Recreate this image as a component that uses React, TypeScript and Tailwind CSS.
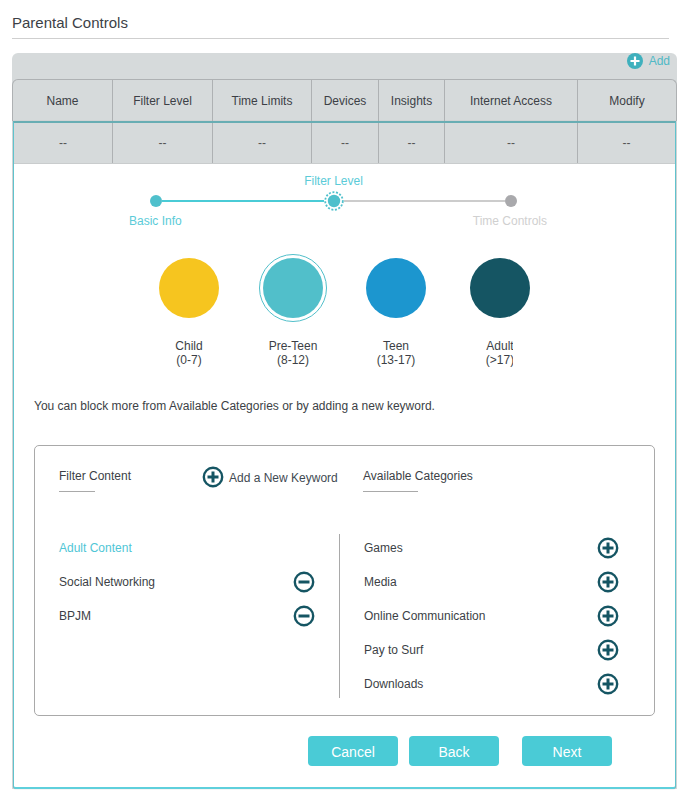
const columns = [
  { name: "Name", width: "w-[99px]", cell: "w-[98px]" },
  { name: "Filter Level", width: "w-[100px]", cell: "w-[100px]" },
  { name: "Time Limits", width: "w-[99px]", cell: "w-[99px]" },
  { name: "Devices", width: "w-[67px]", cell: "w-[67px]" },
  { name: "Insights", width: "w-[66px]", cell: "w-[66px]" },
  { name: "Internet Access", width: "w-[133px]", cell: "w-[133px]" },
  { name: "Modify", width: "w-[99px]", cell: "w-[98px]" },
];

const levels = [
  { name: "Child", age: "(0-7)", color: "bg-[#f6c51f]", slot: "w-[104px]" },
  { name: "Pre-Teen", age: "(8-12)", color: "bg-[#51bfca]", slot: "w-[103px]", selected: true },
  { name: "Teen", age: "(13-17)", color: "bg-[#1c96cf]", slot: "w-[104px]" },
  { name: "Adult", age: "(>17)", color: "bg-[#155563]", slot: "w-[60px]", clip: true },
];

const filtered = ["Adult Content", "Social Networking", "BPJM"];
const available = ["Games", "Media", "Online Communication", "Pay to Surf", "Downloads"];

function RoundIcon({ plus = false }: { plus?: boolean }) {
  return (
    <svg width="22" height="22" viewBox="0 0 22 22" className="shrink-0">
      <circle cx="11" cy="11" r="9.2" fill="none" stroke="#155563" strokeWidth="2.4" />
      <path d="M5.5 11h11" stroke="#155563" strokeWidth="3" />
      {plus && <path d="M11 5.5v11" stroke="#155563" strokeWidth="3" />}
    </svg>
  );
}

function Row({ label, active, icon }: { label: string; active?: boolean; icon?: "plus" | "minus" }) {
  return (
    <div className="flex h-[34px] items-center justify-between">
      <span className={active ? "text-[#4fc6d6]" : ""}>{label}</span>
      {icon && <RoundIcon plus={icon === "plus"} />}
    </div>
  );
}

export default function App() {
  return (
    <div className="h-[797px] w-[681px] overflow-hidden bg-white px-3 font-['Liberation_Sans',Arial,sans-serif] text-xs text-[#3c3f46]">
      <div className="flex h-[39px] items-start border-b border-[#cfcfcf] pt-[14px] text-[15px] leading-[18px]">
        Parental Controls
      </div>

      <div className="mt-[14px] w-[665px] rounded-t-md bg-[#d6dadb]">
        <div className="flex h-[26px] items-start justify-end gap-[6px] pr-[7px] text-[#4fb9c6]">
          <svg width="16" height="16" viewBox="0 0 16 16">
            <circle cx="8" cy="8" r="8" fill="#3fb0bd" />
            <path d="M8 3.5v9M3.5 8h9" stroke="#fff" strokeWidth="2.2" />
          </svg>
          <span className="leading-[17px]">Add</span>
        </div>

        <div className="flex h-[42px] rounded-t-md border-x border-t border-[#aeb1b3]">
          {columns.map((c, i) => (
            <div
              key={c.name}
              className={`flex items-center justify-center ${c.width} ${i > 0 ? "border-l border-[#aeb1b3]" : ""}`}
            >
              {c.name}
            </div>
          ))}
        </div>

        <div className="ml-px w-[663px] rounded-b-[3px] border-x border-t-2 border-b-2 border-x-[#5fc3cd] border-t-[#68adb3] border-b-[#5fd0dc] bg-white shadow-[0_0_1px_#999]">
          <div className="flex h-[41px] border-b border-[#c9cccd] bg-[#d6dadb] text-[#555]">
            {columns.map((c, i) => (
              <div
                key={c.name}
                className={`flex items-center justify-center ${c.cell} ${i > 0 ? "border-l border-[#aeb1b3]" : ""}`}
              >
                --
              </div>
            ))}
          </div>

          <div className="px-5">
            <div className="ml-[60px] w-[460px] pt-[10px]">
              <div className="pl-[19px] text-center leading-[14px] text-[#5bcbd8]">Filter Level</div>
              <div className="ml-[56px] mt-[3px] flex h-5 items-center">
                <span className="h-3 w-3 shrink-0 rounded-full bg-[#4fc0cc]" />
                <span className="h-[2px] w-[162px] bg-[#4acbd6]" />
                <svg width="20" height="20" viewBox="0 0 20 20" className="shrink-0">
                  <circle cx="10" cy="10" r="8.8" fill="none" stroke="#4fc0cc" strokeWidth="1.8" strokeDasharray="2 1.6" />
                  <circle cx="10" cy="10" r="6.2" fill="#4fc0cc" />
                </svg>
                <span className="h-[2px] w-[161px] bg-[#cccccc]" />
                <span className="h-3 w-3 shrink-0 rounded-full bg-[#a9a9ac]" />
              </div>
              <div className="mt-[3px] flex justify-between pl-[35px] leading-[14px]">
                <span className="text-[#5bcbd8]">Basic Info</span>
                <span className="mr-[7px] text-[#d0d0d0]">Time Controls</span>
              </div>
            </div>

            <div className="ml-[125px] mt-[30px] flex">
              {levels.map((l) => (
                <div key={l.name} className={`${l.slot} flex flex-col items-start`}>
                  <div className="relative h-[60px] w-[60px]">
                    {l.selected && (
                      <span className="absolute -inset-1 rounded-full border border-[#51bfca]" />
                    )}
                    <div className={`h-[60px] w-[60px] rounded-full ${l.color}`} />
                  </div>
                  <div
                    className={`mt-[21px] text-center leading-[14px] ${l.clip ? "w-[43px] overflow-hidden" : "w-[60px]"}`}
                  >
                    <div className="w-[60px] whitespace-nowrap">{l.name}</div>
                    <div className="w-[60px] whitespace-nowrap">{l.age}</div>
                  </div>
                </div>
              ))}
            </div>

            <p className="mt-[32px] leading-[14px]">
              You can block more from Available Categories or by adding a new keyword.
            </p>

            <div className="mt-[32px] h-[271px] w-[621px] rounded-[5px] border border-[#a9a9a9] px-6">
              <div className="flex pt-[22px]">
                <div className="w-[143px]">
                  <div className="leading-[16px]">Filter Content</div>
                  <div className="mt-[7px] h-px w-9 bg-[#a9a9a9]" />
                </div>
                <div className="-mt-[2px] flex h-[22px] w-[161px] items-center gap-[5px] text-[#3f4a52]">
                  <RoundIcon plus />
                  <span className="relative top-[1px] whitespace-nowrap">Add a New Keyword</span>
                </div>
                <div>
                  <div className="leading-[16px]">Available Categories</div>
                  <div className="mt-[7px] h-px w-[55px] bg-[#a9a9a9]" />
                </div>
              </div>

              <div className="mt-[42px] flex h-[164px]">
                <div className="w-[281px] border-r border-[#a9a9a9] pr-[24px]">
                  <div className="-mt-[3px]">
                    {filtered.map((f, i) => (
                      <Row key={f} label={f} active={i === 0} icon={i === 0 ? undefined : "minus"} />
                    ))}
                  </div>
                </div>
                <div className="w-[279px] pl-6">
                  <div className="-mt-[3px]">
                    {available.map((a) => (
                      <Row key={a} label={a} icon="plus" />
                    ))}
                  </div>
                </div>
              </div>
            </div>

            <div className="ml-[274px] mt-5 flex h-[30px] text-sm text-white">
              <button className="w-[90px] rounded-[4px] bg-[#4acbd6] pt-px">Cancel</button>
              <button className="ml-[11px] w-[90px] rounded-[4px] bg-[#4acbd6] pt-px">Back</button>
              <button className="ml-[23px] w-[90px] rounded-[4px] bg-[#4acbd6] pt-px">Next</button>
            </div>
            <div className="h-[21px]" />
          </div>
        </div>
      </div>
    </div>
  );
}
